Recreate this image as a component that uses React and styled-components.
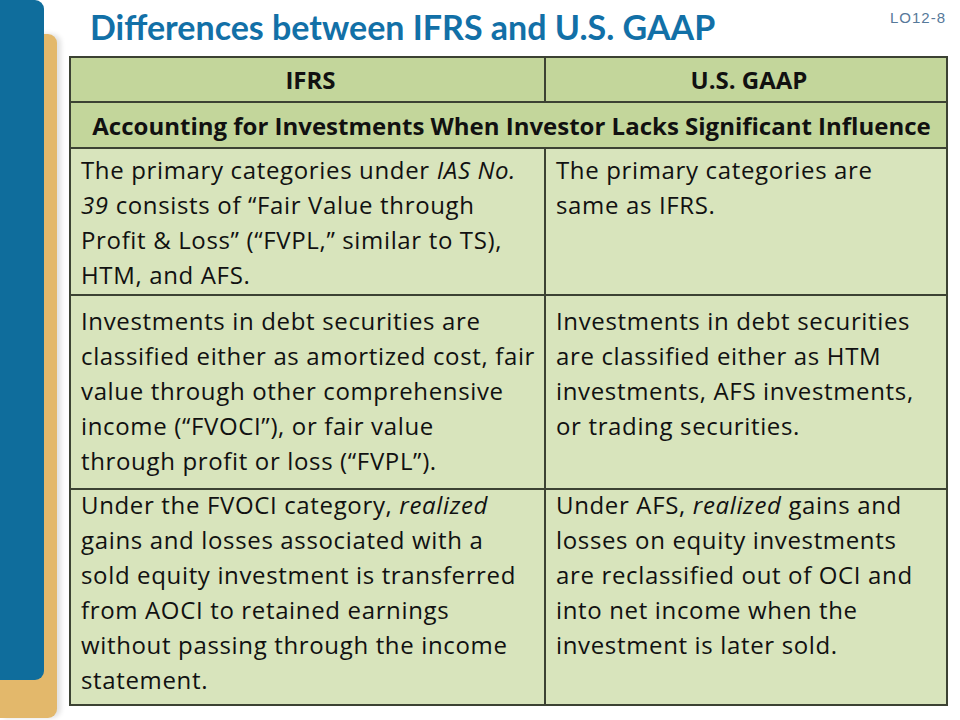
import React from 'react'
import styled, { createGlobalStyle } from 'styled-components';

const Global = createGlobalStyle`
  html, body { margin:0; padding:0; background:#ffffff; }
  body { font-family: "Open Sans", Lato, sans-serif; }
`;

const Slide = styled.div`
  width:960px;
  height:720px;
  display:flex;
  overflow:hidden;
  background:#ffffff;
`;

const Rail = styled.div`
  position:relative;
  width:57px;
  flex:none;
`;

const GoldBar = styled.div`
  margin-top:34px;
  height:684px;
  width:57px;
  background:#e3b86b;
  border-radius:0 9px 9px 0;
  box-shadow: 4px 0 5px rgba(0,0,0,0.12);
`;

const BlueBar = styled.div`
  position:absolute;
  left:0;
  top:0;
  width:44px;
  height:680px;
  background:#0f6d9c;
  border-radius:0 9px 9px 0;
`;

const Main = styled.div`
  flex:1;
  display:flex;
  flex-direction:column;
  padding-left:12px;
`;

const Header = styled.div`
  height:56px;
  display:flex;
  justify-content:space-between;
  align-items:flex-start;
`;

const Title = styled.h1`
  margin:6px 0 0 21px;
  font-family:Lato, "Open Sans", sans-serif;
  font-size:34px;
  font-weight:700;
  color:#1270a7;
  line-height:42px;
  white-space:nowrap;
`;

const Tag = styled.div`
  margin:9px 14px 0 0;
  font-family:"Liberation Sans", Arial, sans-serif;
  font-size:15px;
  letter-spacing:1px;
  color:#56799a;
`;

const Table = styled.table`
  width:877px;
  border-collapse:collapse;
  table-layout:fixed;
`;

const Cell = styled.td`
  border:2px solid #3c4233;
  background:${({head})=>head ? '#c3d69b' : '#d8e4bc'};
  height:${({h})=>h}px;
  padding:0 4px 0 10px;
  vertical-align:${({head})=>head ? 'middle' : 'top'};
  text-align:${({head})=>head ? 'center' : 'left'};
  font-weight:${({head})=>head ? 700 : 400};
  font-size:24px;
  letter-spacing:${({head})=>head ? 0 : 0.65}px;
  line-height:35px;
  color:#111111;
  white-space:nowrap;
  box-sizing:border-box;
`;

const Text = styled.div`
  margin-top:${({offset})=>offset}px;
`;

const rows = [
  {
    h:147, offset:3,
    left:[<>The primary categories under <i>IAS No.</i></>, <><i>39</i> consists of “Fair Value through</>, <>Profit &amp; Loss” (“FVPL,” similar to TS),</>, <>HTM, and AFS.</>],
    right:['The primary categories are','same as IFRS.'],
  },
  {
    h:194, offset:7,
    left:['Investments in debt securities are','classified either as amortized cost, fair','value through other comprehensive','income (“FVOCI”), or fair value','through profit or loss (“FVPL”).'],
    right:['Investments in debt securities','are classified either as HTM','investments, AFS investments,','or trading securities.'],
  },
  {
    h:216, offset:-3,
    left:[<>Under the FVOCI category, <i>realized</i></>, 'gains and losses associated with a','sold equity investment is transferred','from AOCI to retained earnings','without passing through the income','statement.'],
    right:[<>Under AFS, <i>realized</i> gains and</>, 'losses on equity investments','are reclassified out of OCI and','into net income when the','investment is later sold.'],
  },
];

const Lines = ({items, offset}) => (
  <Text offset={offset}>
    {items.map((l,i)=>(<React.Fragment key={i}>{l}{i<items.length-1 && <br/>}</React.Fragment>))}
  </Text>
);

export default function App(){
  return (
    <Slide>
      <Global/>
      <Rail>
        <GoldBar/>
        <BlueBar/>
      </Rail>
      <Main>
        <Header>
          <Title>Differences between IFRS and U.S. GAAP</Title>
          <Tag>LO12-8</Tag>
        </Header>
        <Table>
          <colgroup>
            <col style={{width:'475px'}}/>
            <col style={{width:'402px'}}/>
          </colgroup>
          <tbody>
            <tr>
              <Cell head h={45}>IFRS</Cell>
              <Cell head h={45}>U.S. GAAP</Cell>
            </tr>
            <tr>
              <Cell head h={46} colSpan={2}>Accounting for Investments When Investor Lacks Significant Influence</Cell>
            </tr>
            {rows.map((r,i)=>(
              <tr key={i}>
                <Cell h={r.h}><Lines items={r.left} offset={r.offset}/></Cell>
                <Cell h={r.h}><Lines items={r.right} offset={r.offset}/></Cell>
              </tr>
            ))}
          </tbody>
        </Table>
      </Main>
    </Slide>
  )
}
